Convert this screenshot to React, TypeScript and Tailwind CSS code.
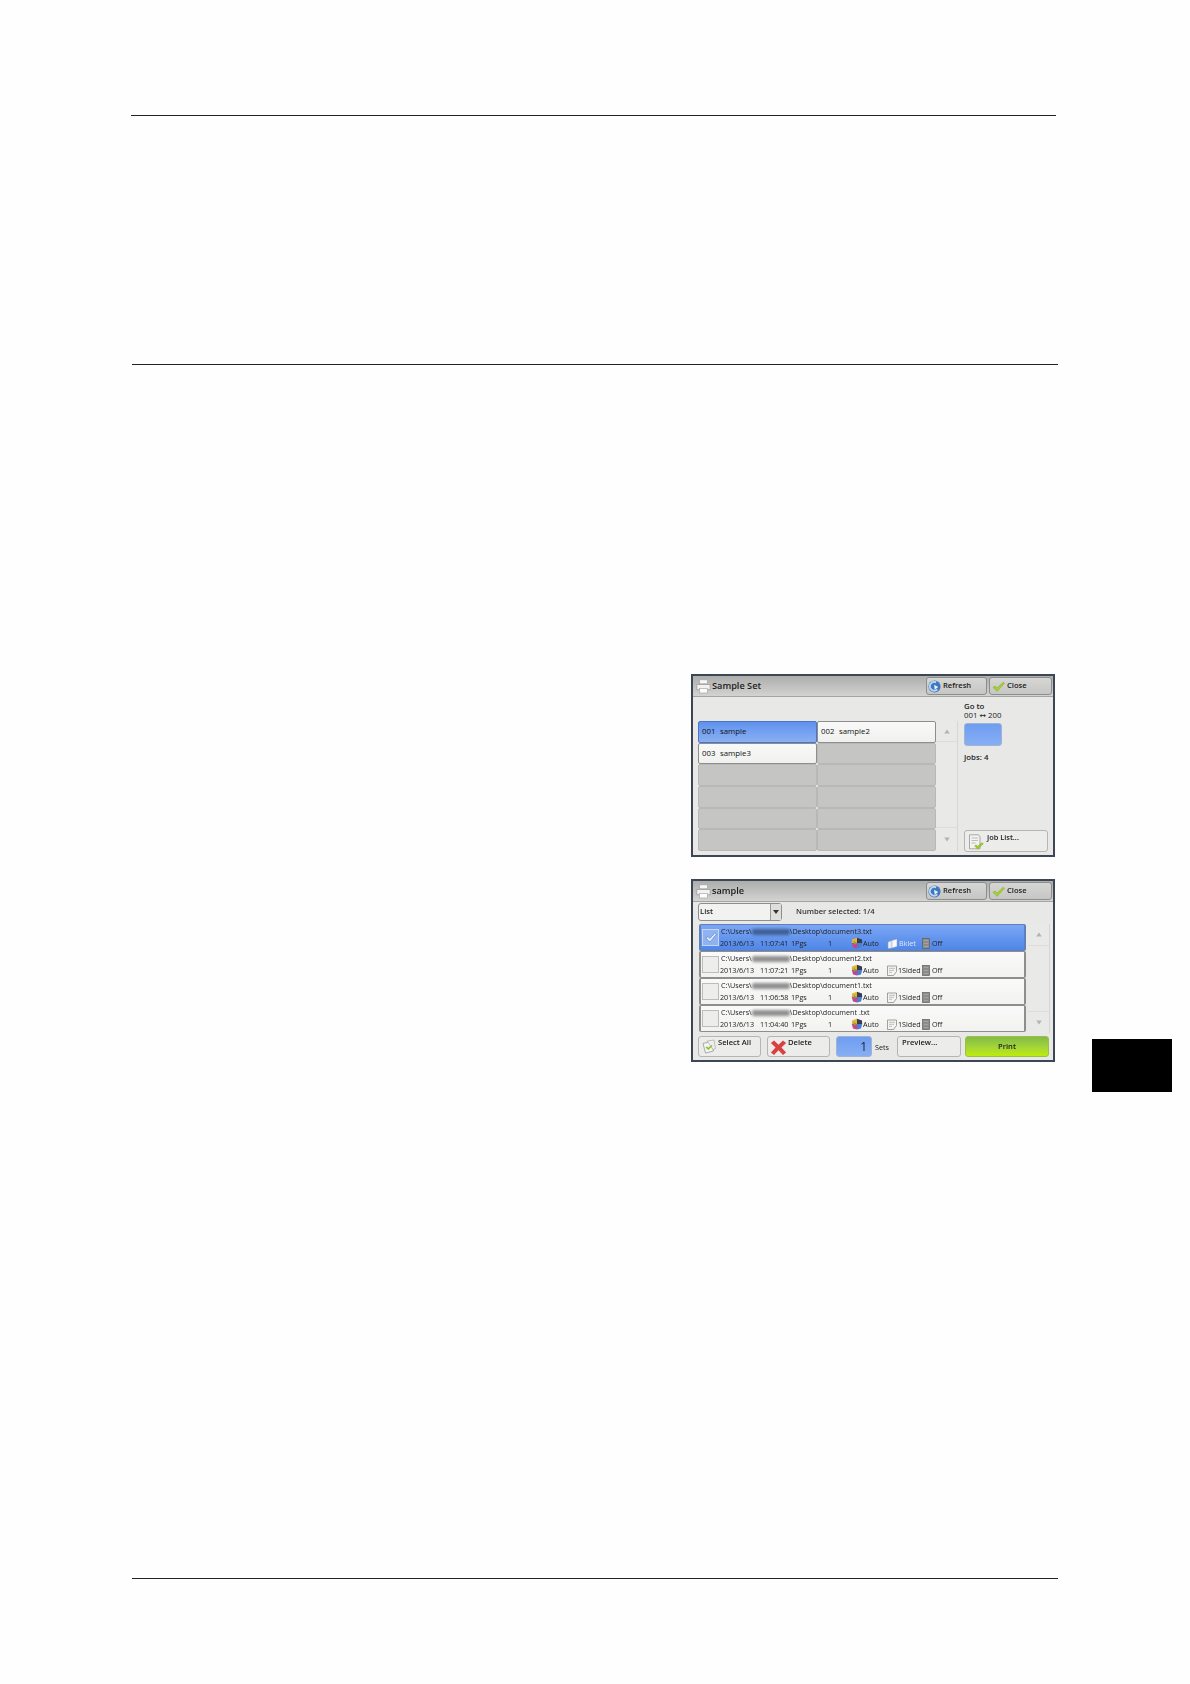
import React from "react";

function Printer() {
  return (
    <svg width="15" height="15" viewBox="0 0 15 15" className="shrink-0">
      <rect x="3.500" y="0.800" width="8" height="4" fill="#f7f7f7" stroke="#a2a2a2" strokeWidth="0.700" />
      <path d="M0.800 5.500h13.400v5.200H0.800z" fill="#f2f2f2" stroke="#9c9c9c" strokeWidth="0.800" />
      <rect x="3.500" y="9.500" width="8" height="4.500" fill="#fcfcfc" stroke="#aaaaaa" strokeWidth="0.700" />
    </svg>
  );
}

function RefreshIcon() {
  return (
    <svg width="13" height="13" viewBox="0 0 12 12" className="shrink-0">
      <circle cx="6" cy="6" r="5.600" fill="#3f78bd" />
      <path d="M7.500 2.200 A4 4 0 1 0 8.600 8.600" fill="none" stroke="#bcd6f2" strokeWidth="1.700" />
      <path d="M5.600 4.400 9.400 6.400 6.200 9z" fill="#e9f2fb" />
    </svg>
  );
}

function Check({ size = 13 }: { size?: number }) {
  return (
    <svg width={size} height={size} viewBox="0 0 12 12" className="shrink-0">
      <path d="M0.800 6.800 3 5.600 4.600 7.400 10.400 2 11.600 3 4.800 10.400z" fill="#a5d02e" stroke="#7aa322" strokeWidth="0.400" />
    </svg>
  );
}

function DocCheck() {
  return (
    <svg width="16" height="16" viewBox="0 0 16 16" className="shrink-0">
      <path d="M1.500 0.800h9l1.500 2v12h-10.500z" fill="#f2f2f0" stroke="#8b8b89" strokeWidth="0.700" />
      <path d="M3.500 4h6.500M3.500 6.500h6.500M3.500 9h4" stroke="#a8a8a6" strokeWidth="0.700" />
      <path d="M6.500 12 8.200 10.800 9.600 12.300 14 8.600 15.400 9.700 9.800 15.200z" fill="#9ccb2e" stroke="#6c9a1f" strokeWidth="0.300" />
    </svg>
  );
}

function DocsCheck() {
  return (
    <svg width="15" height="15" viewBox="0 0 15 15" className="shrink-0">
      <path d="M1 4.500 9 2.500 11.500 12 3.500 14z" fill="#f4f4f2" stroke="#8b8b89" strokeWidth="0.700" />
      <path d="M5 2 12 1 13.500 9.500 11 10.500z" fill="#eeeeec" stroke="#a0a09e" strokeWidth="0.600" />
      <path d="M3.500 8.500 5 7.500 6.300 8.800 9.500 6 10.500 7 6.300 11z" fill="#8fc02c" />
    </svg>
  );
}

function RedX() {
  return (
    <svg width="17" height="17" viewBox="0 0 19 19" className="shrink-0">
      <path d="M1 4.500 4.500 1.800 9.500 6.500 14.500 1.800 18 4.500 12.800 9.500 18 15 14.500 17.800 9.500 12.500 4.500 17.800 1 15 6.200 9.500z" fill="#d9403f" />
    </svg>
  );
}

function ColorIcon() {
  return (
    <svg width="12" height="12" viewBox="0 0 12 12" className="shrink-0">
      <path d="M1 2.500 6 0.800V6H0.800z" fill="#e8b52c" />
      <path d="M6 0.800 11 2.500 11.200 6H6z" fill="#3a3a55" />
      <path d="M0.800 6H6v5.500L2 10.500z" fill="#cf3f8d" />
      <path d="M6 6h5.200L10 10.500 6 11.500z" fill="#4a7fd0" />
      <path d="M2.500 4 6 6 3 8z" fill="#6fae3c" />
    </svg>
  );
}

function SidedIcon() {
  return (
    <svg width="10" height="11" viewBox="0 0 10 11" className="shrink-0">
      <path d="M0.500 1h9v5.500L6.500 10.500H0.500z" fill="#f4f4f2" stroke="#7d7d7b" strokeWidth="0.700" />
      <path d="M2 3.300h6M2 5.300h5M2 7.300h3" stroke="#9a9a98" strokeWidth="0.600" />
    </svg>
  );
}

function BkletIcon() {
  return (
    <svg width="11" height="11" viewBox="0 0 11 11" className="shrink-0">
      <path d="M1 4 5 2.500V10L1 10.500z" fill="#e9eef8" stroke="#9aa5bb" strokeWidth="0.500" />
      <path d="M5 2.500 10 1V8.500L5 10z" fill="#f7f9fd" stroke="#9aa5bb" strokeWidth="0.500" />
    </svg>
  );
}

function OffIcon() {
  return (
    <svg width="8" height="11" viewBox="0 0 8 11" className="shrink-0">
      <rect x="0.500" y="0.500" width="7" height="10" fill="#8c8c8a" stroke="#5f5f5d" strokeWidth="0.700" />
      <path d="M1.800 2.500h4.400M1.800 5.500h4.400M1.800 8.500h4.400" stroke="#b4b4b2" strokeWidth="0.600" />
    </svg>
  );
}

function Arrow({ up }: { up?: boolean }) {
  return (
    <svg width="6" height="5" viewBox="0 0 6 5">
      <path d={up ? "M3 0.500 5.800 4.500H0.200z" : "M3 4.500 5.800 0.500H0.200z"} fill="#b4b4b2" />
    </svg>
  );
}

function TitleBar({ title }: { title: string }) {
  return (
    <div className="flex h-[21px] shrink-0 items-center border-b border-[#a5a5a3] bg-gradient-to-b from-[#adadab] to-[#d3d3d1] pl-[3px] pr-[1px]">
      <Printer />
      <span className="ml-[1px] flex-1 text-[9.200px] font-semibold text-[#1c1c1c]">{title}</span>
      <button className="flex h-[18px] w-[61px] items-center rounded-[3px] border border-[#8d8d8b] bg-gradient-to-b from-[#d6d6d4] to-[#c6c6c4] pl-[1px] text-[7.600px] font-semibold text-[#1c1c1c]">
        <RefreshIcon />
        <span className="ml-[2px]">Refresh</span>
      </button>
      <button className="ml-[2px] flex h-[18px] w-[63px] items-center rounded-[3px] border border-[#8d8d8b] bg-gradient-to-b from-[#d6d6d4] to-[#c6c6c4] pl-[2px] text-[7.600px] font-semibold text-[#1c1c1c]">
        <Check />
        <span className="ml-[2px]">Close</span>
      </button>
    </div>
  );
}

const cellEmpty = "border border-[#b8b8b6] bg-[#c5c5c3] rounded-[2px]";
const cellWhite = "border border-[#8e8e8c] bg-gradient-to-b from-[#f9f9f9] to-[#f0f0ee] rounded-[2px]";
const cellBlue = "border border-[#4a76c4] bg-gradient-to-b from-[#5f91ee] to-[#8bb0f2] rounded-[2px]";

function Cell({ kind, num, name }: { kind: string; num?: string; name?: string }) {
  return (
    <div className={`flex items-center pl-[3px] text-[7.800px] text-[#111] ${kind}`}>
      {num && <span className="w-[18px]">{num}</span>}
      {name && <span>{name}</span>}
    </div>
  );
}

function ScrollColumn({ topH, bottomH }: { topH: string; bottomH: string }) {
  return (
    <div className="flex w-[22px] shrink-0 flex-col justify-between border-r border-[#d6d6d4] bg-[#e9e9e7]">
      <div className={`flex items-center justify-center border-b border-[#dcdcda] ${topH}`}>
        <Arrow up />
      </div>
      <div className={`flex items-center justify-center border-t border-[#dcdcda] ${bottomH}`}>
        <Arrow />
      </div>
    </div>
  );
}

function SampleSetPanel() {
  return (
    <div className="flex h-[183px] w-[364px] flex-col border-2 border-[#3c4656] bg-[#e8e8e6]">
      <TitleBar title="Sample Set" />
      <div className="flex flex-1 pl-[5px] pt-[24px]">
        <div className="grid h-[130px] w-[238px] shrink-0 grid-cols-2 grid-rows-6">
          <Cell kind={cellBlue} num="001" name="sample" />
          <Cell kind={cellWhite} num="002" name="sample2" />
          <Cell kind={cellWhite} num="003" name="sample3" />
          <Cell kind={cellEmpty} />
          <Cell kind={cellEmpty} />
          <Cell kind={cellEmpty} />
          <Cell kind={cellEmpty} />
          <Cell kind={cellEmpty} />
          <Cell kind={cellEmpty} />
          <Cell kind={cellEmpty} />
          <Cell kind={cellEmpty} />
          <Cell kind={cellEmpty} />
        </div>
        <div className="flex h-[130px]">
          <ScrollColumn topH="h-[21px]" bottomH="h-[24px]" />
        </div>
        <div className="-mt-[19px] ml-[6px] flex h-[150px] w-[84px] flex-col text-[7.800px] leading-[9px] text-[#222]">
          <span className="font-semibold">Go to</span>
          <span>
            001 <span className="font-['DejaVu_Sans',sans-serif]">↔</span> 200
          </span>
          <div className="mt-[3px] h-[23px] w-[38px] rounded-[3px] border border-[#9fb4d4] bg-gradient-to-b from-[#6f9df0] to-[#86aef4]" />
          <span className="mt-[7px] font-semibold">Jobs: 4</span>
          <button className="mt-auto flex h-[22px] items-start rounded-[3px] border border-[#b5b5b3] bg-[#ececea] pl-[3px] pt-[3px] font-semibold">
            <DocCheck />
            <span className="ml-[3px] -mt-[1px] text-[7.400px]">Job List...</span>
          </button>
        </div>
      </div>
    </div>
  );
}

type Row = {
  file: string;
  time: string;
  plex: string;
  selected?: boolean;
};

const rows: Row[] = [
  { file: "document3.txt", time: "11:07:41", plex: "Bklet", selected: true },
  { file: "document2.txt", time: "11:07:21", plex: "1Sided" },
  { file: "document1.txt", time: "11:06:58", plex: "1Sided" },
  { file: "document .txt", time: "11:04:40", plex: "1Sided" },
];

function JobRow({ row }: { row: Row }) {
  const bg = row.selected
    ? "border-[#5e7fb8] bg-gradient-to-b from-[#7ba6f4] to-[#4f86e8]"
    : "border-[#8e8e8c] bg-gradient-to-b from-[#fafafa] to-[#f2f2f0]";
  return (
    <div className={`flex h-[27px] items-center rounded-[2px] border-x-2 border-y ${bg} pl-[1px] text-[7.200px] leading-[11px] text-[#222]`}>
      <div className={`flex h-[17px] w-[17px] shrink-0 items-center justify-center border ${row.selected ? "border-[#c6d6f2] bg-[#8fb3f0]" : "border-[#bcbcba] bg-[#ededeb]"}`}>
        {row.selected && (
          <svg width="12" height="11" viewBox="0 0 12 11">
            <path d="M0.800 6 3 4.500 4.800 6.500 10 0.800 11.500 2 5 10z" fill="#e6eefc" stroke="#4c78c4" strokeWidth="0.600" />
          </svg>
        )}
      </div>
      <div className="ml-[1px] flex flex-col">
        <div className="flex items-center pl-[1px]">
          <span>C:\Users\</span>
          <span className={`h-[6px] w-[38px] rounded-[2px] blur-[1.500px] ${row.selected ? "bg-[#3f5f94]" : "bg-[#8f8f8f]"}`} />
          <span>\Desktop\{row.file}</span>
        </div>
        <div className="flex items-center">
          <span className="w-[40px]">2013/6/13</span>
          <span className="w-[31px]">{row.time}</span>
          <span className="w-[37px]">1Pgs</span>
          <span className="w-[23px]">1</span>
          <ColorIcon />
          <span className="w-[24px]">Auto</span>
          <span className="flex w-[35px] items-center">
            {row.plex === "Bklet" ? <BkletIcon /> : <SidedIcon />}
            <span className={`ml-[1px] ${row.selected ? "text-[#dfe8f8]" : ""}`}>{row.plex}</span>
          </span>
          <OffIcon />
          <span className="ml-[2px]">Off</span>
        </div>
      </div>
    </div>
  );
}

function SamplePanel() {
  return (
    <div className="mt-[22px] flex h-[183px] w-[364px] flex-col border-2 border-[#3c4656] bg-[#e8e8e6]">
      <TitleBar title="sample" />
      <div className="flex h-[22px] shrink-0 items-start pl-[5px] pt-[1px]">
        <div className="flex h-[18px] w-[84px] items-center rounded-[3px] border border-[#8e8e8c] bg-[#f2f2f0] pl-[1px] text-[7.600px] font-semibold text-[#222]">
          <span className="flex-1">List</span>
          <span className="flex h-full w-[11px] items-center justify-center border-l border-[#9a9a98] bg-[#dededc]">
            <svg width="6" height="4" viewBox="0 0 6 4">
              <path d="M0 0h6L3 4z" fill="#333" />
            </svg>
          </span>
        </div>
        <span className="ml-[14px] mt-[3px] text-[7.600px] font-semibold text-[#333]">Number selected: 1/4</span>
      </div>
      <div className="flex h-[109px] shrink-0 pl-[6px]">
        <div className="flex w-[327px] shrink-0 flex-col">
          {rows.map((r) => (
            <JobRow key={r.file} row={r} />
          ))}
        </div>
        <div className="ml-[2px] flex">
          <ScrollColumn topH="h-[22px]" bottomH="h-[22px]" />
        </div>
      </div>
      <div className="mt-[3px] flex h-[21px] shrink-0 items-stretch pl-[5px] text-[7.600px] font-semibold leading-[9px] text-[#222]">
        <button className="flex w-[63px] items-start rounded-[3px] border border-[#b5b5b3] bg-[#ececea] pl-[3px] pt-[2px]">
          <DocsCheck />
          <span className="ml-[1px] -mt-[1px]">Select All</span>
        </button>
        <button className="ml-[6px] flex w-[63px] items-start rounded-[3px] border border-[#b5b5b3] bg-[#ececea] pl-[2px] pt-[2px]">
          <RedX />
          <span className="ml-[1px] -mt-[1px]">Delete</span>
        </button>
        <div className="ml-[6px] flex w-[36px] items-center justify-end rounded-[3px] border border-[#9fb4d4] bg-gradient-to-b from-[#6f9df0] to-[#86aef4] pr-[4px] text-[12px] font-normal">
          1
        </div>
        <span className="ml-[3px] flex w-[22px] items-center pt-[2px] text-[7.200px] font-normal">Sets</span>
        <button className="flex w-[64px] items-start rounded-[3px] border border-[#b5b5b3] bg-[#ececea] pl-[4px] pt-[1px]">
          Preview...
        </button>
        <button className="ml-[4px] w-[84px] rounded-[3px] border border-[#9cbf4a] bg-gradient-to-b from-[#84bb48] to-[#bdec00]">
          Print
        </button>
      </div>
    </div>
  );
}

export default function App() {
  return (
    <div className="flex h-[1684px] w-[1190px] flex-col bg-[#fefefe] font-['Open_Sans','Noto_Sans',sans-serif]">
      <div className="ml-[131px] mt-[115px] h-px w-[925px] bg-[#222]" />
      <div className="ml-[132px] mt-[248px] h-px w-[926px] bg-[#222]" />
      <div className="ml-[691px] mt-[309px] flex">
        <div className="flex w-[364px] shrink-0 flex-col blur-[0.400px]">
          <SampleSetPanel />
          <SamplePanel />
        </div>
        <div className="ml-[37px] mt-[365px] h-[53px] w-[80px] bg-black" />
      </div>
      <div className="ml-[132px] mt-[486px] h-px w-[926px] bg-[#222]" />
    </div>
  );
}
